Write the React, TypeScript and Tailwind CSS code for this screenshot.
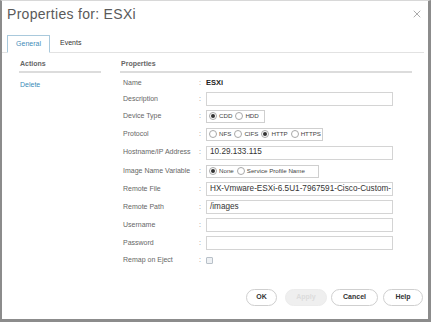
import { X } from 'lucide-react'
import type { ReactNode } from 'react'

function Radio({ on, label }: { on?: boolean; label: string }) {
  return (
    <span className="flex items-center gap-[2px]">
      <span className="flex h-[8px] w-[8px] items-center justify-center rounded-full border border-[#a8a8a8] bg-white">
        {on && <span className="h-[4px] w-[4px] rounded-full bg-[#333]" />}
      </span>
      <span>{label}</span>
    </span>
  )
}

function Group({ children, w }: { children: ReactNode; w: string }) {
  return (
    <div className={`flex h-[13px] items-center gap-[3px] border border-[#cfcfcf] px-[2px] text-[6.2px] text-[#444] ${w}`}>
      {children}
    </div>
  )
}

function Input({ value }: { value?: string }) {
  return (
    <div className="flex h-[14px] w-[187px] items-center overflow-hidden whitespace-nowrap border border-[#d4d4d4] pl-[3px] text-[8.2px] text-[#333]">
      {value}
    </div>
  )
}

const rows: { label: string; h: string; field: ReactNode }[] = [
  { label: 'Name', h: 'h-[16px]', field: <span className="text-[7.5px] font-bold text-[#222]">ESXi</span> },
  { label: 'Description', h: 'h-[16px]', field: <Input /> },
  {
    label: 'Device Type',
    h: 'h-[18px]',
    field: (
      <Group w="w-[59px]">
        <Radio on label="CDD" />
        <Radio label="HDD" />
      </Group>
    ),
  },
  {
    label: 'Protocol',
    h: 'h-[18px]',
    field: (
      <Group w="w-[117px]">
        <Radio label="NFS" />
        <Radio label="CIFS" />
        <Radio on label="HTTP" />
        <Radio label="HTTPS" />
      </Group>
    ),
  },
  { label: 'Hostname/IP Address', h: 'h-[19px]', field: <Input value="10.29.133.115" /> },
  {
    label: 'Image Name Variable',
    h: 'h-[18px]',
    field: (
      <Group w="w-[113px]">
        <Radio on label="None" />
        <Radio label="Service Profile Name" />
      </Group>
    ),
  },
  { label: 'Remote File', h: 'h-[18px]', field: <Input value="HX-Vmware-ESXi-6.5U1-7967591-Cisco-Custom-" /> },
  { label: 'Remote Path', h: 'h-[18px]', field: <Input value="/images" /> },
  { label: 'Username', h: 'h-[18px]', field: <Input /> },
  { label: 'Password', h: 'h-[18px]', field: <Input /> },
  {
    label: 'Remap on Eject',
    h: 'h-[16px]',
    field: <span className="h-[7px] w-[7px] rounded-[1px] border border-[#b8c0c8] bg-[#eef1f4]" />,
  },
]

export default function App() {
  return (
    <div className="flex h-[322px] w-[431px] flex-col border-t border-l-2 border-r-[3px] border-b-[3px] border-t-[#d8d8d8] border-l-[#8c8c8c] border-r-[#8c8c8c] border-b-[#8c8c8c] bg-white font-['Liberation_Sans',Arial,sans-serif]">
      {/* Title */}
      <div className="flex h-[34px] items-start justify-between pl-[5px] pr-[5px] pt-[4px]">
        <span className="text-[14px] leading-[18px] tracking-[0.3px] text-[#5a5a5a]">Properties for: ESXi</span>
        <X size={12} strokeWidth={1.1} className="mt-[3px] text-[#666]" />
      </div>

      {/* Tabs */}
      <div className="mr-[4px] flex h-[18px] items-end border-b border-[#e2e2e2] pl-[5px]">
        <div className="-mb-px flex h-[18px] w-[43px] items-center justify-center border border-b-white border-[#a9c9dc] bg-white text-[7px] text-[#3f8cb8]">
          General
        </div>
        <div className="flex h-[18px] items-center pl-[10px] text-[7px] text-[#333]">Events</div>
      </div>

      {/* Body */}
      <div className="flex pl-[17px]">
        <div className="w-[82px]">
          <div className="border-b-2 border-[#dcdcdc] pb-[3px] pl-[1px] pt-[6px] text-[7px] font-bold leading-[9px] text-[#666]">
            Actions
          </div>
          <div className="mt-[7px] pl-[1px] text-[7px] leading-[9px] text-[#3d8cb8]">Delete</div>
        </div>
        <div className="ml-[19px] w-[292px]">
          <div className="border-b-2 border-[#dcdcdc] pb-[3px] pl-[1px] pt-[6px] text-[7px] font-bold leading-[9px] text-[#666]">
            Properties
          </div>
          <div className="mt-[2px]">
            {rows.map((r) => (
              <div key={r.label} className={`flex items-center ${r.h}`}>
                <span className="w-[79px] pl-[3px] text-[7px] text-[#666]">{r.label}</span>
                <span className="w-[7px] text-[7px] text-[#888]">:</span>
                {r.field}
              </div>
            ))}
          </div>
        </div>
      </div>

      {/* Footer */}
      <div className="mt-auto mb-[13px] flex justify-end pr-[5px] text-[7px] font-bold">
        <button className="mr-[8px] h-[17px] w-[31px] rounded-full border border-[#cfcfcf] bg-white text-[#333]">OK</button>
        <button className="mr-[4px] h-[17px] w-[42px] rounded-full border border-[#ececec] bg-[#efefef] text-[#dcdcdc]">Apply</button>
        <button className="mr-[5px] h-[17px] w-[47px] rounded-full border border-[#cfcfcf] bg-white text-[#333]">Cancel</button>
        <button className="h-[17px] w-[40px] rounded-full border border-[#cfcfcf] bg-white text-[#333]">Help</button>
      </div>
    </div>
  )
}
